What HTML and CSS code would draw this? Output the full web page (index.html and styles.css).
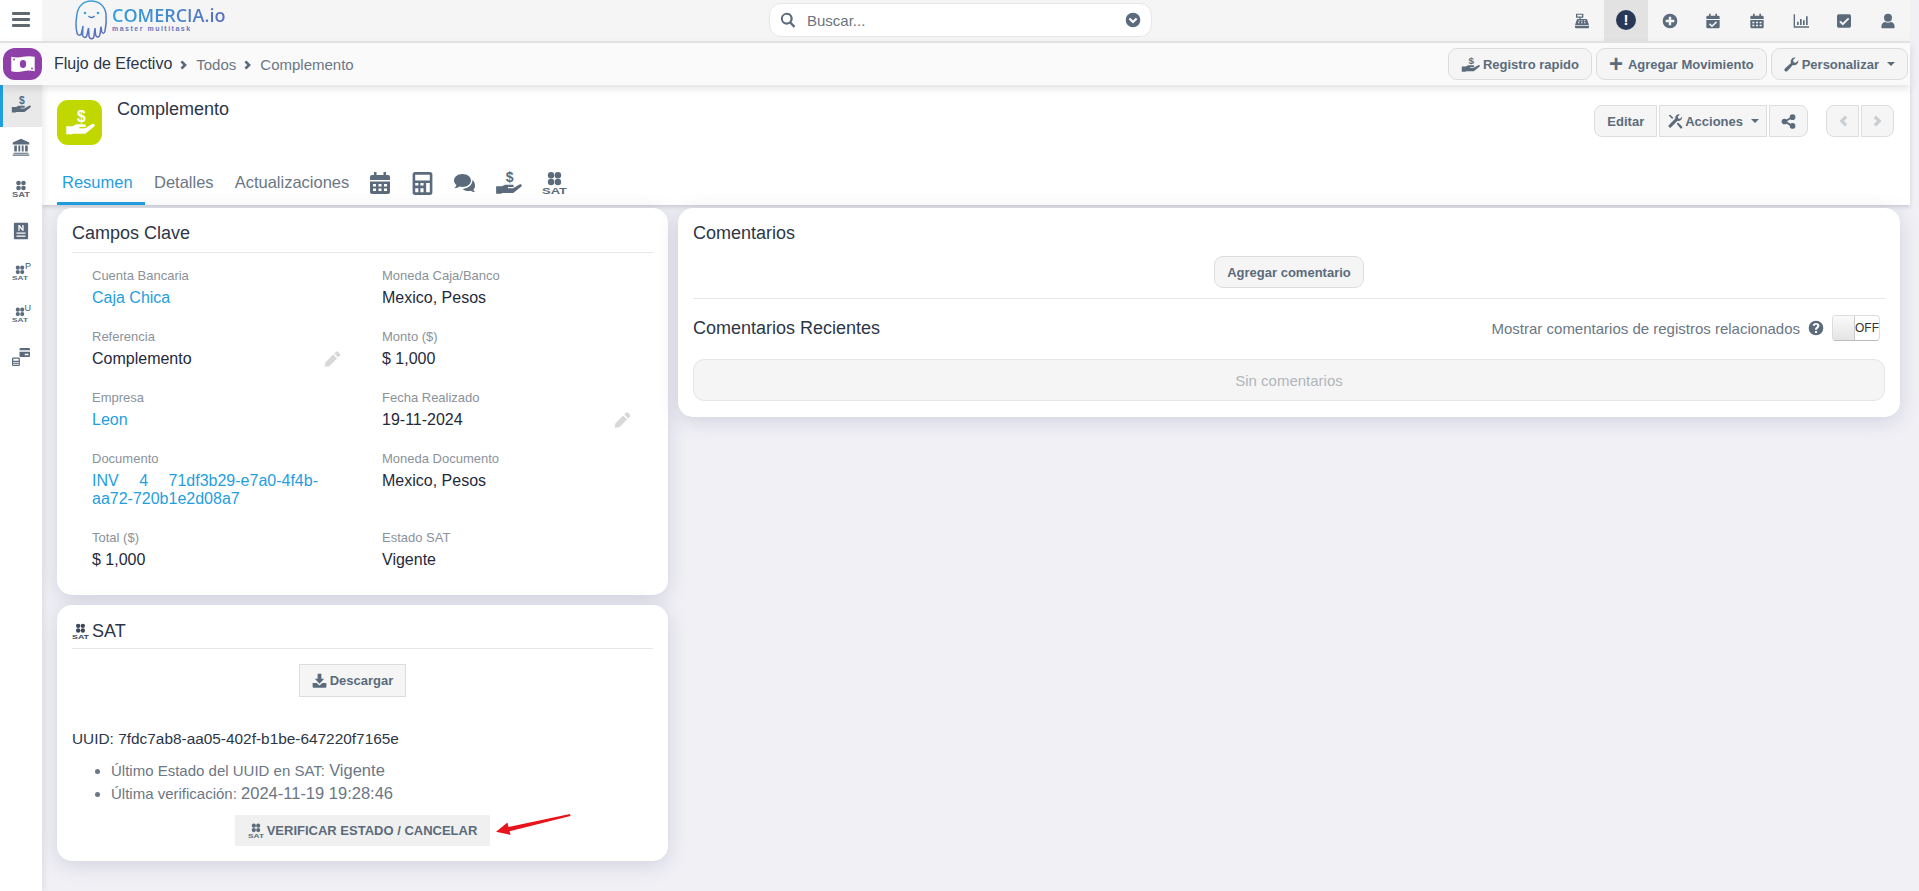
FILE: index.html
```html
<!DOCTYPE html>
<html lang="es">

<head>
  <meta charset="UTF-8" />
  <title>Comercia.io - Complemento</title>
  <link rel="stylesheet" href="styles.css">
</head>

<body>
  <svg class="defs" width="0" height="0">
    <symbol id="i-hand" viewBox="0 0 24 24">
      <path d="M1 14.500h5l3-1.500h6.500c1.400 0 1.700 2 .2 2.200h-4.200v1h4.500l5.800-3.400c1.600-.8 2.700 1.100 1.400 2.100l-7 5.600H6.500l-1 .5H1z" />
    </symbol>
    <symbol id="i-sat" viewBox="0 0 24 24">
      <circle cx="8.700" cy="4" r="3.100" />
      <circle cx="15.300" cy="4" r="3.100" />
      <circle cx="8.700" cy="10.600" r="3.100" />
      <circle cx="15.300" cy="10.600" r="3.100" />
    </symbol>
    <symbol id="i-calendar" viewBox="0 0 24 24">
      <path fill-rule="evenodd" d="M6 1h2.500v3H15.500V1H18v3h2a2 2 0 0 1 2 2v3H2V6a2 2 0 0 1 2-2h2zM2 10.500h20V21a2 2 0 0 1-2 2H4a2 2 0 0 1-2-2zM5 13v2.500h3V13zM10.500 13v2.500h3V13zM16 13v2.500h3V13zM5 17.500V20h3v-2.500zM10.500 17.500V20h3v-2.500zM16 17.500V20h3v-2.500z" />
    </symbol>
    <symbol id="i-calc" viewBox="0 0 24 24">
      <path fill-rule="evenodd" d="M5 1h14a2.500 2.500 0 0 1 2.500 2.500v17A2.500 2.500 0 0 1 19 23H5a2.500 2.500 0 0 1-2.500-2.500v-17A2.500 2.500 0 0 1 5 1zM5 3.500V9h14V3.500zM5 11.500V14h3v-2.500zM10 11.500V14h3v-2.500zM15.500 11.500V20.500H19v-9zM5 16.500v4h3v-4zM10 16.500v4h3v-4z" />
    </symbol>
    <symbol id="i-comments" viewBox="0 0 24 24">
      <path d="M9.500 3C4.800 3 1 5.900 1 9.500c0 1.800 1 3.400 2.500 4.600-.4 1.300-1.200 2.300-2.200 3.100 2 0 3.800-.6 5.200-1.700 1 .3 2 .5 3 .5 4.700 0 8.500-2.900 8.500-6.500S14.200 3 9.500 3z" />
      <path d="M19.300 8.600c.1.300.1.600.1.900 0 4.300-4.200 8-9.600 8.400 1.300 1.300 3.300 2.100 5.700 2.100.8 0 1.600-.1 2.300-.3 1.100.8 2.500 1.300 4.200 1.300-.8-.7-1.400-1.500-1.700-2.500 1.100-1 1.700-2.200 1.700-3.600 0-2.500-.8-4.700-2.700-5.800z" />
    </symbol>
    <symbol id="i-bank" viewBox="0 0 24 24">
      <path d="M12 1 23 6v2.500H1V6zM3 10h3.500v8H3zM8.500 10h2.500v8H8.500zM13 10h2.500v8H13zM17.500 10H21v8h-3.500zM2 19.500h20V21H2zM1 22h22v1.500H1z" />
    </symbol>
    <symbol id="i-note" viewBox="0 0 24 24">
      <path fill-rule="evenodd" d="M4 1h16a1.500 1.500 0 0 1 1.500 1.500v19A1.500 1.500 0 0 1 20 23H4a1.500 1.500 0 0 1-1.500-1.500v-19A1.500 1.500 0 0 1 4 1zM6 14v1.800h12V14zM6 18v1.800h12V18z" />
      <path fill="#fff" d="M8.500 4h1.700l3.600 4.600V4h1.700v7.500h-1.700L10.200 7v4.500H8.500z" />
    </symbol>
    <symbol id="i-cardcalc" viewBox="0 0 24 24">
      <path fill-rule="evenodd" d="M11.500 0h11A1.500 1.500 0 0 1 24 1.500V3H10V1.500A1.500 1.500 0 0 1 11.500 0zM10 5h14v5.500a1.500 1.500 0 0 1-1.500 1.500h-11A1.500 1.500 0 0 1 10 10.500zM17 7.500V9.500h5V7.500z" />
      <path fill-rule="evenodd" d="M1.500 12.500h7.500A1.500 1.500 0 0 1 10.500 14v8.500A1.500 1.500 0 0 1 9 24H1.500A1.500 1.500 0 0 1 0 22.500V14a1.500 1.500 0 0 1 1.500-1.500zM1.700 14.200v2.800h7.100v-2.800zM1.700 18.500V20h1.900v-1.500zM4.300 18.500V20h1.900v-1.500zM6.900 18.500V20h1.900v-1.500zM1.700 21v1.500h1.900V21zM4.300 21v1.500h1.900V21zM6.900 21v1.500h1.900V21z" />
    </symbol>
    <symbol id="i-register" viewBox="0 0 24 24">
      <path fill-rule="evenodd" d="M3 1h11v6H10v2h8a2 2 0 0 1 2 1.500L22.500 18H1.500L4 10.500A2 2 0 0 1 6 9h2V7H3zM5 2.800v2.400h7V2.800zM7 11v1.500h2V11zM11 11v1.500h2V11zM15 11v1.500h2V11zM6 14v1.500h2V14zM10.500 14v1.500h2V14zM15 14v1.500h2V14z" />
      <path d="M1.500 19h21v2.500A1.500 1.500 0 0 1 21 23H3a1.500 1.500 0 0 1-1.500-1.500z" />
    </symbol>
    <symbol id="i-plus-circle" viewBox="0 0 24 24">
      <path fill-rule="evenodd" d="M12 1a11 11 0 1 1 0 22 11 11 0 0 1 0-22zM10.200 5.500v4.700H5.500v3.600h4.700v4.700h3.600v-4.700h4.700v-3.600h-4.700V5.500z" />
    </symbol>
    <symbol id="i-calcheck" viewBox="0 0 24 24">
      <path fill-rule="evenodd" d="M6 1h2.500v3h7V1H18v3h2a2 2 0 0 1 2 2v3H2V6a2 2 0 0 1 2-2h2zM2 10.500h20V21a2 2 0 0 1-2 2H4a2 2 0 0 1-2-2zM16.500 12.500l-6 5.800-2.900-2.800-1.600 1.600 4.500 4.400 7.600-7.400z" />
    </symbol>
    <symbol id="i-chart" viewBox="0 0 24 24">
      <path d="M1 2h2v18h21v2H1zM6 13h2.500v5H6zM10.500 9H13v9h-2.500zM15 11h2.500v7H15zM19.500 5H22v13h-2.500z" />
    </symbol>
    <symbol id="i-checksq" viewBox="0 0 24 24">
      <path fill-rule="evenodd" d="M4 2h16a2.500 2.500 0 0 1 2.500 2.500v15A2.500 2.500 0 0 1 20 22H4a2.500 2.500 0 0 1-2.500-2.500v-15A2.500 2.500 0 0 1 4 2zM18 7.200l-7.800 7.600-3.400-3.300-1.900 1.900 5.300 5.200 9.700-9.500z" />
    </symbol>
    <symbol id="i-user" viewBox="0 0 24 24">
      <circle cx="12" cy="7" r="6" />
      <path d="M2 21c0-5 3-7.500 6-7.500 1.200.6 2.600 1 4 1s2.800-.4 4-1c3 0 6 2.500 6 7.500 0 1.200-.8 2-2 2H4c-1.200 0-2-.8-2-2z" />
    </symbol>
    <symbol id="i-search" viewBox="0 0 24 24">
      <path fill-rule="evenodd" d="M10 1a9 9 0 0 1 7.300 14.300l5.700 5.700-2.500 2.500-5.700-5.700A9 9 0 1 1 10 1zm0 3.300a5.700 5.700 0 1 0 0 11.400 5.700 5.700 0 0 0 0-11.400z" />
    </symbol>
    <symbol id="i-chevcircle" viewBox="0 0 24 24">
      <path fill-rule="evenodd" d="M12 1a11 11 0 1 1 0 22 11 11 0 0 1 0-22zM7.700 8.500 5.500 10.700l6.500 6.500 6.500-6.500-2.200-2.200L12 12.800z" />
    </symbol>
    <symbol id="i-wrench" viewBox="0 0 24 24">
      <path d="M23 6.500a6.500 6.500 0 0 1-8.800 6.100L5.500 22.300a2.800 2.800 0 0 1-4-4l9.700-8.700A6.500 6.500 0 0 1 18.500.8l-4 4 .8 3.700 3.700.8 4-4c.1.300 0 .800 0 1.200z" />
    </symbol>
    <symbol id="i-tools" viewBox="0 0 24 24">
      <path d="M22.500 5.500a5.500 5.500 0 0 1-7.300 5.200L5 21a2.400 2.400 0 0 1-3.400-3.400l10.200-10.300A5.500 5.500 0 0 1 19 .8l-3.300 3.300.6 3 3 .6L22.600 4.300c0 .4-.1.800-.1 1.200z" />
      <path d="M1 2 3.500 1 8.500 6 6.500 8zM14 15.500l2-2 6.500 6.500a2 2 0 0 1-2.800 2.800z" />
    </symbol>
    <symbol id="i-share" viewBox="0 0 24 24">
      <circle cx="18.500" cy="5" r="4.500" />
      <circle cx="5.500" cy="12" r="4.500" />
      <circle cx="18.500" cy="19" r="4.500" />
      <path d="M17 3.800l1.500 2.600L7 13.200 5.500 10.600zM7 10.800l11.500 6.800L17 20.200 5.500 13.400z" />
    </symbol>
    <symbol id="i-pencil" viewBox="0 0 24 24">
      <path d="M17 2.500a2 2 0 0 1 2.800 0l2.700 2.700a2 2 0 0 1 0 2.800L20 10.500 14.500 5zM13 6.500 18.500 12 7.500 23 1 23.800 1.900 17.500z" />
    </symbol>
    <symbol id="i-download" viewBox="0 0 24 24">
      <path d="M9 1h6v8h4.500L12 17 4.500 9H9z" />
      <path d="M1 16h6.500l4.500 4 4.500-4H23v6a1.500 1.500 0 0 1-1.500 1.500h-19A1.500 1.500 0 0 1 1 22z" />
    </symbol>
    <symbol id="i-question" viewBox="0 0 24 24">
      <path fill-rule="evenodd" d="M12 1a11 11 0 1 1 0 22 11 11 0 0 1 0-22zM12 4.500c-3 0-4.600 1.600-5 3.800l2.800.7c.2-1 .9-1.900 2.100-1.900 1.100 0 1.900.6 1.900 1.500 0 1.900-3.300 2-3.300 5.100v.8h3.200v-.5c0-1.900 3.400-2.100 3.400-5.500 0-2.500-2.200-4-5.100-4zM10.400 16.500v3h3.200v-3z" />
    </symbol>
    <symbol id="i-chev-r" viewBox="0 0 24 24">
      <path d="M8 1 19 12 8 23 3.500 18.500 10 12 3.500 5.500z" />
    </symbol>
    <symbol id="i-chev-l" viewBox="0 0 24 24">
      <path d="M16 1 5 12 16 23 20.500 18.500 14 12 20.500 5.500z" />
    </symbol>
  </svg>

  <header class="topbar">
    <div class="topbar-left">
      <button class="menu-btn" aria-label="Menu">
        <span></span><span></span><span></span>
      </button>
      <div class="logo">
        <svg class="logo-mark" viewBox="0 0 34 40" fill="none" stroke="url(#logo-grad)" stroke-width="1.500">
          <defs>
            <linearGradient id="logo-grad" x1="0" y1="0" x2="0.300" y2="1">
              <stop offset="0" stop-color="#35a4dc" />
              <stop offset="1" stop-color="#5d6dbb" />
            </linearGradient>
          </defs>
          <path d="M3 33C1 25 2 20 3 14 4 6 10 1 17 1c8 0 14 5 15 13 .5 5 .5 10-1 17-.5 3-3 3-3.500 0L27 26.500 26 34c-.5 4-4 4-4.500 0L21 28l-1 8c-.5 4-4.500 3.500-5 0L14.500 28 13 35c-.8 3.500-4 3-4.500 0L9 26 7.500 33C7 36 3.800 36 3 33z" />
          <circle cx="11" cy="13" r="1.300" fill="#35a4dc" stroke="none" />
          <circle cx="24" cy="13" r="1.300" fill="#35a4dc" stroke="none" />
          <path d="M14.500 16c1.500 2 4.500 2 6 0" />
        </svg>
        <div class="logo-text">
          <span class="logo-name">COMERCIA.io</span>
          <span class="logo-sub">master multitask</span>
        </div>
      </div>
    </div>
    <div class="search">
      <svg class="ic search-ic"><use href="#i-search" /></svg>
      <span class="search-ph">Buscar...</span>
      <svg class="ic search-chev"><use href="#i-chevcircle" /></svg>
    </div>
    <nav class="top-icons">
      <a><svg class="ic"><use href="#i-register" /></svg></a>
      <a class="alert"><span>!</span></a>
      <a><svg class="ic"><use href="#i-plus-circle" /></svg></a>
      <a><svg class="ic"><use href="#i-calcheck" /></svg></a>
      <a><svg class="ic"><use href="#i-calendar" /></svg></a>
      <a><svg class="ic"><use href="#i-chart" /></svg></a>
      <a><svg class="ic"><use href="#i-checksq" /></svg></a>
      <a><svg class="ic"><use href="#i-user" /></svg></a>
    </nav>
  </header>

  <div class="subbar">
    <div class="module-icon">
      <svg viewBox="0 0 28 20" width="26" height="18">
        <path fill="#fff" d="M1 2c4 1 9 1 13 0s9-1 13 0v16c-4-1-9-1-13 0s-9 1-13 0z" />
        <ellipse cx="14" cy="10" rx="3.500" ry="4.500" fill="#8e3fa8" />
        <circle cx="4" cy="5" r="1" fill="#8e3fa8" />
        <circle cx="24" cy="15" r="1" fill="#8e3fa8" />
      </svg>
    </div>
    <div class="crumbs">
      <span class="crumb-main">Flujo de Efectivo</span>
      <svg class="ic crumb-sep"><use href="#i-chev-r" /></svg>
      <span>Todos</span>
      <svg class="ic crumb-sep"><use href="#i-chev-r" /></svg>
      <span>Complemento</span>
    </div>
    <div class="sub-actions">
      <button class="btn"><svg class="ic ic-h" viewBox="0 0 24 24"><use href="#i-hand" /><text class="dollar" x="13" y="11">$</text></svg>Registro rapido</button>
      <button class="btn"><span class="plus">+</span>Agregar Movimiento</button>
      <button class="btn"><svg class="ic"><use href="#i-wrench" /></svg>Personalizar<i class="caret"></i></button>
    </div>
  </div>

  <div class="layout">
    <aside class="sidebar">
      <a class="active"><svg class="ic ic-h" viewBox="0 0 24 24"><use href="#i-hand" /><text class="dollar" x="13" y="11">$</text></svg></a>
      <a><svg class="ic"><use href="#i-bank" /></svg></a>
      <a><svg class="ic" viewBox="0 0 24 24"><use href="#i-sat" /><text class="sat-txt" x="12" y="22" textLength="24" lengthAdjust="spacingAndGlyphs">SAT</text></svg></a>
      <a><svg class="ic"><use href="#i-note" /></svg></a>
      <a class="sat-letter"><svg class="ic" viewBox="0 0 24 24"><use href="#i-sat" /><text class="sat-txt" x="12" y="22" textLength="24" lengthAdjust="spacingAndGlyphs">SAT</text></svg><b>P</b></a>
      <a class="sat-letter"><svg class="ic" viewBox="0 0 24 24"><use href="#i-sat" /><text class="sat-txt" x="12" y="22" textLength="24" lengthAdjust="spacingAndGlyphs">SAT</text></svg><b>U</b></a>
      <a><svg class="ic"><use href="#i-cardcalc" /></svg></a>
    </aside>

    <main class="content">
      <section class="detail-head">
        <div class="detail-top">
          <div class="record-icon"><svg class="ic" viewBox="0 0 24 24"><use href="#i-hand" /><text class="dollar" x="13" y="11">$</text></svg></div>
          <h1>Complemento</h1>
          <div class="record-actions">
            <button class="btn btn-first">Editar</button>
            <button class="btn btn-mid"><svg class="ic"><use href="#i-tools" /></svg>Acciones<i class="caret"></i></button>
            <button class="btn btn-last btn-share"><svg class="ic"><use href="#i-share" /></svg></button>
            <div class="pager">
              <button class="btn btn-first" aria-label="Anterior"><svg class="ic"><use href="#i-chev-l" /></svg></button>
              <button class="btn btn-last" aria-label="Siguiente"><svg class="ic"><use href="#i-chev-r" /></svg></button>
            </div>
          </div>
        </div>
        <nav class="tabs">
          <a class="tab on">Resumen</a>
          <a class="tab">Detalles</a>
          <a class="tab">Actualizaciones</a>
          <svg class="ic tab-first"><use href="#i-calendar" /></svg>
          <svg class="ic tab-calc"><use href="#i-calc" /></svg>
          <svg class="ic"><use href="#i-comments" /></svg>
          <svg class="ic ic-wide" viewBox="0 0 24 24"><use href="#i-hand" /><text class="dollar" x="13" y="11">$</text></svg>
          <svg class="ic tab-calc tab-sat" viewBox="0 0 24 24"><use href="#i-sat" /><text class="sat-txt" x="12" y="22" textLength="24" lengthAdjust="spacingAndGlyphs">SAT</text></svg>
        </nav>
      </section>

      <div class="cards">
        <div class="col">
          <section class="card key-card">
            <h2>Campos Clave</h2>
            <div class="fields">
              <div class="field"><label>Cuenta Bancaria</label><p class="link">Caja Chica</p></div>
              <div class="field"><label>Moneda Caja/Banco</label><p>Mexico, Pesos</p></div>
              <div class="field"><label>Referencia</label><p>Complemento<svg class="ic pencil"><use href="#i-pencil" /></svg></p></div>
              <div class="field"><label>Monto ($)</label><p>$ 1,000</p></div>
              <div class="field"><label>Empresa</label><p class="link">Leon</p></div>
              <div class="field"><label>Fecha Realizado</label><p>19-11-2024<svg class="ic pencil"><use href="#i-pencil" /></svg></p></div>
              <div class="field"><label>Documento</label><p class="link block">INV&nbsp;&nbsp;&nbsp;&nbsp;&nbsp;4&nbsp;&nbsp;&nbsp;&nbsp;&nbsp;71df3b29-e7a0-4f4b-aa72-720b1e2d08a7</p></div>
              <div class="field"><label>Moneda Documento</label><p>Mexico, Pesos</p></div>
              <div class="field"><label>Total ($)</label><p>$ 1,000</p></div>
              <div class="field"><label>Estado SAT</label><p>Vigente</p></div>
            </div>
          </section>

          <section class="card sat-card">
            <h2><svg class="ic" viewBox="0 0 24 24"><use href="#i-sat" /><text class="sat-txt" x="12" y="22" textLength="24" lengthAdjust="spacingAndGlyphs">SAT</text></svg>SAT</h2>
            <div class="center">
              <button class="btn btn-square"><svg class="ic"><use href="#i-download" /></svg>Descargar</button>
            </div>
            <p class="uuid">UUID: 7fdc7ab8-aa05-402f-b1be-647220f7165e</p>
            <ul class="sat-list">
              <li>Último Estado del UUID en SAT: <span>Vigente</span></li>
              <li>Última verificación: <span>2024-11-19 19:28:46</span></li>
            </ul>
            <div class="center verify-row">
              <button class="btn-verify"><svg class="ic" viewBox="0 0 24 24"><use href="#i-sat" /><text class="sat-txt" x="12" y="22" textLength="24" lengthAdjust="spacingAndGlyphs">SAT</text></svg>VERIFICAR ESTADO / CANCELAR</button>
              <svg class="arrow" viewBox="0 0 72 20" width="75" height="21">
                <path fill="#e8141c" d="M71 0 L71.500 1.800 13 16.500 14 20 0 17 11 8 12 12.500z" />
              </svg>
            </div>
          </section>
        </div>

        <section class="card comments-card">
          <h2 class="plain">Comentarios</h2>
          <div class="center add-row">
            <button class="btn">Agregar comentario</button>
          </div>
          <div class="recent-head">
            <h2 class="plain">Comentarios Recientes</h2>
            <div class="related">
              <span>Mostrar comentarios de registros relacionados</span>
              <svg class="ic"><use href="#i-question" /></svg>
              <div class="toggle"><i></i><b>OFF</b></div>
            </div>
          </div>
          <div class="empty">Sin comentarios</div>
        </section>
      </div>
    </main>
  </div>
</body>

</html>
```

FILE: styles.css
```css
* {
  box-sizing: border-box;
}

body {
  margin: 0;
  height: 891px;
  overflow: hidden;
  padding-right: 9px;
  background-color: #f0f0f5;
  font-family: "Liberation Sans", Arial, sans-serif;
  color: #2c3648;
}

.defs {
  position: absolute;
}

.ic {
  width: 18px;
  height: 18px;
  fill: #5b6b7b;
  flex: none;
}

.dollar {
  font-size: 12.500px;
  font-weight: 700;
  text-anchor: middle;
}

.sat-txt {
  font-size: 8.800px;
  font-weight: 700;
  text-anchor: middle;
}

button {
  font-family: inherit;
}

/* top bar */
.topbar {
  display: flex;
  height: 43px;
  background-color: #f5f5f5;
  border-bottom: 2px solid #e6e6e6;
}

.topbar-left {
  display: flex;
  width: 769px;
}

.menu-btn {
  display: flex;
  flex-direction: column;
  justify-content: center;
  gap: 3px;
  width: 42px;
  height: 41px;
  padding: 0 12px 2px;
  border: 0;
  background-color: #fff;
}

.menu-btn span {
  height: 3px;
  background-color: #5f6770;
  border-radius: 1px;
}

.logo {
  display: flex;
  margin-left: 32px;
}

.logo-mark {
  width: 34px;
  height: 40px;
}

.logo-text {
  display: flex;
  flex-direction: column;
  margin: 6px 0 0 4px;
}

.logo-name {
  font-family: "Open Sans", sans-serif;
  font-size: 18px;
  font-weight: 600;
  line-height: 19px;
  background: linear-gradient(90deg, #2f9fdc, #5b6fc0);
  -webkit-background-clip: text;
  background-clip: text;
  color: transparent;
}

.logo-sub {
  font-size: 7px;
  line-height: 8px;
  letter-spacing: 1.500px;
  color: #6a76bd;
  font-weight: 700;
}

.search {
  display: flex;
  align-items: center;
  width: 383px;
  height: 34px;
  margin-top: 3px;
  padding: 0 10px;
  background-color: #fff;
  border: 1px solid #e6e6e6;
  border-radius: 12px;
}

.search-ic {
  width: 16px;
  height: 16px;
}

.search-ph {
  flex: 1;
  margin-left: 11px;
  font-size: 15px;
  color: #6b7480;
}

.search-chev {
  width: 16px;
  height: 16px;
}

.top-icons {
  display: flex;
  margin-left: auto;
}

.top-icons a {
  display: flex;
  align-items: center;
  justify-content: center;
  width: 43.700px;
  height: 41px;
}

.top-icons .ic {
  width: 16px;
  height: 16px;
}

.top-icons .alert {
  background-color: #e2e2e2;
}

.alert span {
  width: 20px;
  height: 20px;
  border-radius: 50%;
  margin-top: -2px;
  background-color: #2a3858;
  color: #fff;
  font-size: 15px;
  font-weight: 700;
  line-height: 20px;
  text-align: center;
}

/* second bar */
.subbar {
  position: relative;
  z-index: 3;
  display: flex;
  align-items: center;
  height: 42px;
  padding: 0 2px 0 3px;
  background-color: #fafafa;
  box-shadow: 0 3px 8px rgba(60, 60, 80, 0.16);
}

.module-icon {
  display: flex;
  align-items: center;
  justify-content: center;
  width: 39px;
  height: 32px;
  background-color: #8e3fa8;
  border-radius: 12px;
}

.crumbs {
  display: flex;
  align-items: center;
  margin-left: 12px;
  font-size: 15px;
  color: #6b7785;
}

.crumb-main {
  font-size: 16px;
  color: #2c3648;
}

.crumbs .crumb-sep {
  width: 10px;
  height: 10px;
  margin: 1px 7px 0 7px;
}

.sub-actions {
  display: flex;
  gap: 4px;
  margin-left: auto;
}

.btn {
  display: inline-flex;
  align-items: center;
  justify-content: center;
  height: 32px;
  padding: 0 12px;
  background-color: #f5f5f5;
  border: 1px solid #ddd;
  border-radius: 9px;
  font-size: 13px;
  font-weight: 700;
  color: #5b6b7b;
}

.btn .ic {
  width: 15px;
  height: 15px;
  margin-right: 3px;
}

.btn .ic-h {
  width: 19px;
  height: 19px;
}

.plus {
  margin-right: 5px;
  font-size: 24px;
  line-height: 20px;
}

.caret {
  width: 0;
  height: 0;
  margin-left: 8px;
  border-left: 4px solid transparent;
  border-right: 4px solid transparent;
  border-top: 4px solid #5b6b7b;
}

/* sidebar + content */
.layout {
  display: flex;
  height: 806px;
}

.sidebar {
  position: relative;
  z-index: 2;
  width: 42px;
  background-color: #fff;
  box-shadow: 2px 0 6px rgba(60, 60, 80, 0.1);
}

.sidebar a {
  position: relative;
  display: flex;
  align-items: center;
  justify-content: center;
  height: 42px;
  padding-bottom: 3px;
}

.sidebar a.active {
  background-color: #e9e9e9;
  border-left: 3px solid #1f9ee0;
  padding-right: 3px;
}

.sidebar .ic-h {
  width: 20px;
  height: 20px;
}

.sat-letter .ic {
  width: 16px;
  height: 16px;
  margin-right: 3px;
}

.sat-letter b {
  position: absolute;
  top: 9px;
  right: 11px;
  font-size: 9px;
  line-height: 9px;
  font-weight: 400;
  color: #4c5a68;
}

.content {
  flex: 1;
}

.detail-head {
  height: 120px;
  padding: 0 15px;
  background-color: #fff;
  box-shadow: 0 2px 4px rgba(60, 60, 80, 0.2);
}

.detail-top {
  display: flex;
  height: 76px;
  padding-top: 15px;
}

.record-icon {
  display: flex;
  align-items: center;
  justify-content: center;
  width: 45px;
  height: 45px;
  background-color: #c1d700;
  border-radius: 11px;
}

.record-icon .ic {
  width: 30px;
  height: 30px;
  fill: #fff;
}

h1 {
  margin: -2px 0 0 15px;
  font-size: 18px;
  line-height: 22px;
  font-weight: 400;
}

.record-actions {
  display: flex;
  gap: 2px;
  margin: 5px 1px 0 auto;
}

.btn-first {
  border-radius: 8px 0 0 8px;
}

.btn-mid {
  border-radius: 0;
  padding: 0 7px 0 8px;
}

.btn-mid .ic {
  margin-right: 2px;
}

.btn-mid .caret {
  margin-left: 8px;
}

.btn-last {
  border-radius: 0 8px 8px 0;
}

.btn.btn-share {
  padding: 0 11px;
}

.btn-share .ic {
  margin-right: 0;
}

.pager {
  display: flex;
  gap: 2px;
  margin-left: 16px;
}

.pager .btn {
  width: 33px;
  padding: 0;
}

.pager .ic {
  width: 12px;
  height: 12px;
  margin: 0;
  fill: #c9ced3;
}

.tabs {
  display: flex;
  align-items: center;
  gap: 18px;
  height: 44px;
}

.tab {
  height: 44px;
  margin-right: -18px;
  padding: 12px 5px 0;
  font-size: 16.500px;
  color: #6b7785;
}

.tab.on {
  width: 88px;
  border-bottom: 3px solid #1f9ee0;
  color: #1f9ee0;
}

.tab:nth-child(2) {
  margin-left: 4px;
}

.tab:nth-child(3) {
  margin-left: 11px;
}

.tabs .ic {
  width: 24px;
  height: 24px;
}

.tabs .tab-first {
  margin-left: 14px;
}

.tabs .tab-calc {
  width: 25px;
  height: 25px;
}

.tabs .tab-sat {
  margin-left: 2px;
}

.tabs .ic-wide {
  width: 27px;
  height: 27px;
}

/* cards */
.cards {
  display: flex;
  align-items: flex-start;
  gap: 10px;
  padding: 3px 10px 0 15px;
}

.col {
  display: flex;
  flex-direction: column;
  gap: 10px;
  width: 611px;
  flex: none;
}

.card {
  padding: 15px;
  background-color: #fff;
  border-radius: 15px;
  box-shadow: 0 4px 20px rgba(90, 90, 140, 0.2);
}

h2 {
  display: flex;
  align-items: center;
  margin: 0;
  padding-bottom: 9px;
  border-bottom: 1px solid #e6e6e6;
  font-size: 18px;
  line-height: 20px;
  font-weight: 400;
}

h2.plain {
  border-bottom: 0;
  padding-bottom: 0;
}

.key-card {
  height: 387px;
}

.fields {
  display: grid;
  grid-template-columns: 249px 249px;
  column-gap: 41px;
  padding: 13px 0 0 20px;
}

.field {
  padding-bottom: 20px;
}

.field label {
  display: block;
  height: 20px;
  font-size: 13px;
  line-height: 20px;
  color: #8a929b;
}

.field p {
  display: flex;
  justify-content: space-between;
  margin: 3px 0 0;
  font-size: 16px;
  line-height: 18px;
  color: #1f2a3c;
}

.field p.link {
  color: #1f9ee0;
}

.field p.block {
  display: block;
  word-spacing: -0.350px;
}

.pencil {
  width: 17px;
  height: 17px;
  fill: #d8d8d8;
}

.sat-card {
  height: 256px;
}

.sat-card h2 {
  margin-top: 1px;
  padding-bottom: 7px;
}

.sat-card h2 .ic {
  width: 17px;
  height: 17px;
  margin-right: 3px;
  fill: #3c4858;
}

.center {
  display: flex;
  justify-content: center;
}

.btn-square {
  border-radius: 0;
  height: 33px;
  margin: 15px 20px 0 0;
}

.uuid {
  margin: 33px 0 0;
  font-size: 15.400px;
  line-height: 18px;
  color: #2c3648;
}

.sat-list {
  margin: 11px 0 0;
  padding-left: 39px;
  font-size: 15px;
  line-height: 23px;
  color: #6b7785;
}

.sat-list span {
  font-size: 16.500px;
}

.verify-row {
  position: relative;
  margin-top: 10px;
}

.btn-verify {
  display: inline-flex;
  align-items: center;
  height: 31px;
  padding: 0 13px;
  background-color: #f0f0f0;
  border: 0;
  font-size: 13px;
  font-weight: 700;
  color: #5b6b7b;
}

.btn-verify .ic {
  width: 16px;
  height: 16px;
  margin-right: 3px;
}

.arrow {
  position: absolute;
  left: 424px;
  top: -1px;
}

.comments-card {
  flex: 1;
  height: 209px;
}

.add-row {
  padding-top: 13px;
  padding-bottom: 10px;
  border-bottom: 1px solid #e6e6e6;
}

.recent-head {
  display: flex;
  align-items: center;
  justify-content: space-between;
  height: 46px;
  margin-top: 6px;
  padding-right: 5px;
}

.related {
  display: flex;
  align-items: center;
  font-size: 15px;
  color: #6b7785;
}

.related .ic {
  width: 16px;
  height: 16px;
  margin: 0 8px;
}

.toggle {
  display: flex;
  width: 48px;
  height: 26px;
  border: 1px solid #ddd;
  border-bottom-color: #bbb;
  border-radius: 4px;
  overflow: hidden;
}

.toggle i {
  width: 24px;
  background: linear-gradient(#fafafa, #e4e4e4);
  border-right: 1px solid #ccc;
}

.toggle b {
  flex: 1;
  font-size: 12px;
  font-weight: 400;
  line-height: 24px;
  text-align: center;
  color: #333;
}

.empty {
  height: 42px;
  margin-top: 8px;
  background-color: #f5f5f5;
  border: 1px solid #e6e6e6;
  border-radius: 11px;
  font-size: 15px;
  line-height: 42px;
  text-align: center;
  color: #b0b5bb;
}
```
